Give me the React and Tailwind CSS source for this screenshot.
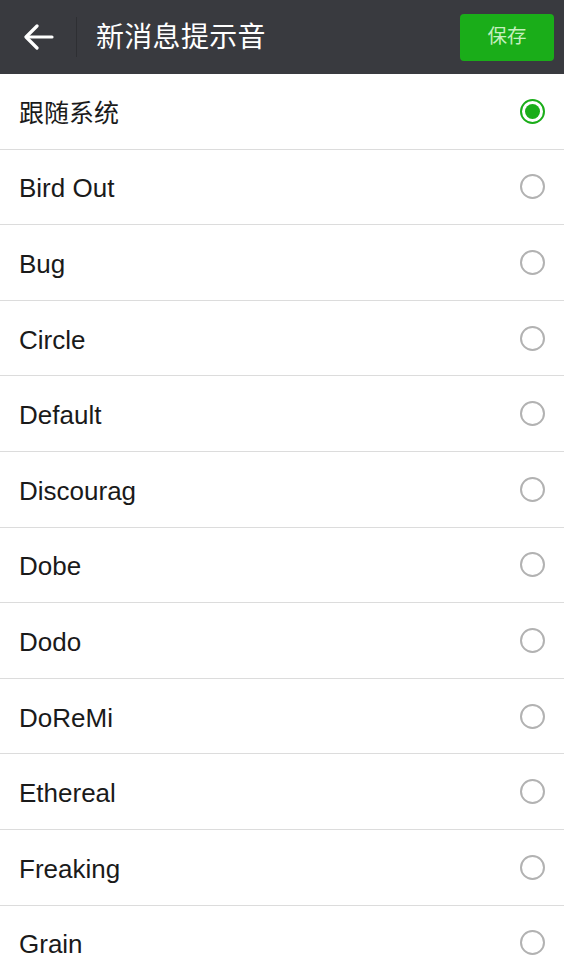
import { useState } from "react";

const SOUNDS = [
  "跟随系统",
  "Bird Out",
  "Bug",
  "Circle",
  "Default",
  "Discourag",
  "Dobe",
  "Dodo",
  "DoReMi",
  "Ethereal",
  "Freaking",
  "Grain",
];

function Radio({ checked }) {
  if (checked) {
    return (
      <span className="w-[25px] h-[25px] rounded-full border-2 border-[#1aad19] flex items-center justify-center">
        <span className="w-[15px] h-[15px] rounded-full bg-[#1aad19]" />
      </span>
    );
  }
  return <span className="w-[25px] h-[25px] rounded-full border-2 border-[#b2b2b2]" />;
}

export default function App() {
  const [selected, setSelected] = useState(0);

  return (
    <div className="w-[564px] h-[960px] overflow-hidden bg-white font-['Liberation_Sans','Noto_Sans_CJK_SC',sans-serif]">
      {/* Top bar */}
      <div className="h-[74px] bg-[#393a3f] flex items-center pl-[24px] pr-[10px]">
        <svg width="30" height="26" viewBox="0 0 30 26" fill="none" stroke="white" strokeWidth="3.2" strokeLinecap="round" strokeLinejoin="round">
          <path d="M28 13H3" />
          <path d="M13 2L2 13l11 11" />
        </svg>
        <div className="w-px h-[40px] bg-[#2e2f33] ml-[22px] mr-[19px]" />
        <h1 className="text-white text-[28px] tracking-[0.3px] flex-1 pt-[1px]">新消息提示音</h1>
        <button className="w-[94px] h-[47px] rounded-[4px] bg-[#1aad19] text-[#c5efbf] text-[19.5px]">
          保存
        </button>
      </div>

      {/* List */}
      <ul>
        {SOUNDS.map((name, i) => (
          <li
            key={name}
            onClick={() => setSelected(i)}
            className="h-[75.6px] flex items-center justify-between px-[19px] border-b border-[#dcdcdc] text-[#1a1a1a]"
          >
            <span className={i === 0 ? "text-[25px] pt-[4px]" : "text-[26px] pt-[4px]"}>{name}</span>
            <Radio checked={selected === i} />
          </li>
        ))}
      </ul>
    </div>
  );
}
